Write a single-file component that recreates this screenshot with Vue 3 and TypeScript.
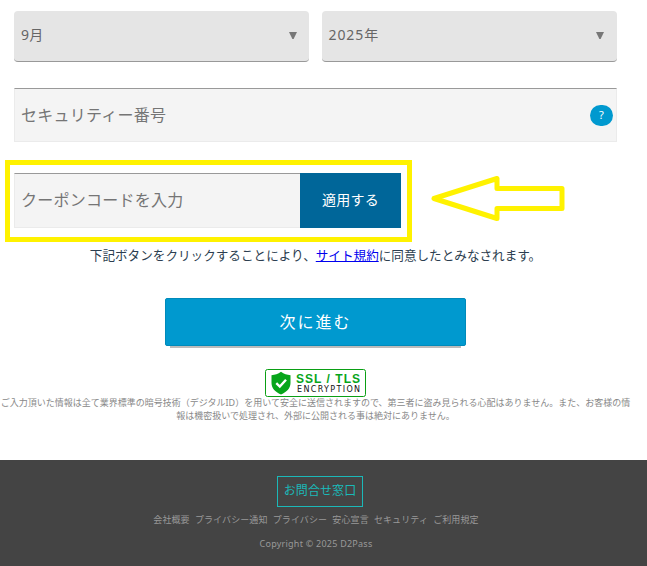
<script setup lang="ts">
interface FooterLink { label: string }

const expiry: string[] = ['9月', '2025年']
const links: FooterLink[] = [
  { label: '会社概要' },
  { label: 'プライバシー通知' },
  { label: 'プライバシー' },
  { label: '安心宣言' },
  { label: 'セキュリティ' },
  { label: 'ご利用規定' },
]
</script>

<template>
  <div class="page">
    <main class="form">
      <div class="selects">
        <div v-for="item in expiry" :key="item" class="select">
          <span class="value">{{ item }}</span>
          <svg class="caret" width="8" height="7" viewBox="0 0 8 7"><path d="M0 0H8L4.6 7H3.4Z" fill="#777" /></svg>
        </div>
      </div>

      <div class="field security">
        <span class="placeholder">セキュリティー番号</span>
        <span class="help">?</span>
      </div>

      <div class="coupon">
        <div class="field code"><span class="placeholder">クーポンコードを入力</span></div>
        <button class="apply" type="button">適用する</button>
        <div class="highlight"></div>
        <svg class="arrow" width="138" height="48" viewBox="0 0 138 48">
          <path d="M4 24.500L67 4.500V14.500H132V34.500H67V44.500Z" fill="none" stroke="#fff200" stroke-width="5" stroke-linejoin="round" />
        </svg>
      </div>

      <p class="terms">下記ボタンをクリックすることにより、<a>サイト規約</a>に同意したとみなされます。</p>
      <button class="next" type="button">次に進む</button>

      <svg class="ssl" width="101" height="28" viewBox="0 0 101 28">
        <rect x=".5" y=".5" width="100" height="27" rx="2" fill="#fff" stroke="#0a9f14" />
        <path d="M16 2.800C13 5 10 6 6.500 6.200V14C6.500 19 10 23 16 25.500C22 23 25.500 19 25.500 14V6.200C22 6 19 5 16 2.800Z" fill="#07a51b" />
        <path d="M11.300 14.200L14.800 17.500L21 10.800" fill="none" stroke="#fff" stroke-width="2.400" />
        <text x="31" y="14" class="ssl-title" textLength="64">SSL / TLS</text>
        <text x="32" y="23" class="ssl-sub" textLength="63">ENCRYPTION</text>
      </svg>
      <p class="notice">ご入力頂いた情報は全て業界標準の暗号技術（デジタルID）を用いて安全に送信されますので、第三者に盗み見られる心配はありません。また、お客様の情<br />報は機密扱いで処理され、外部に公開される事は絶対にありません。</p>
    </main>

    <footer class="footer">
      <a class="contact">お問合せ窓口</a>
      <nav class="links"><a v-for="link in links" :key="link.label">{{ link.label }}</a></nav>
      <p class="copy">Copyright © 2025 D2Pass</p>
    </footer>
  </div>
</template>

<style>
body { margin: 0; background: #fff; }
</style>

<style scoped>
* { box-sizing: border-box; }
.page {
  width: 647px;
  height: 566px;
  overflow: hidden;
  display: flex;
  flex-direction: column;
  background: #fff;
  font-family: "Noto Sans", "Noto Sans CJK JP", sans-serif;
}
p { margin: 0; }
button { border: 0; padding: 0; font-family: inherit; }
.form {
  width: 631px;
  height: 460px;
  padding-top: 11px;
  display: flex;
  flex-direction: column;
  align-items: center;
}
.selects { display: flex; gap: 13px; width: 603px; }
.select {
  flex: 1;
  height: 51px;
  padding: 0 12px 4px 7px;
  display: flex;
  align-items: center;
  justify-content: space-between;
  background: #e5e5e5;
  border-bottom: 1px solid #999;
  border-radius: 4px;
  color: #666;
  font-size: 14px;
}
.select + .select { padding-right: 13px; }
.value { letter-spacing: .9px; }
.select:first-child .value { letter-spacing: .3px; }
.caret { margin-top: 3px; }
.field {
  display: flex;
  align-items: center;
  justify-content: space-between;
  height: 55px;
  padding: 0 3px 0 6px;
  background: #f4f4f4;
  border: 1px solid #ebebeb;
  border-top-color: #999;
  color: #757575;
  font-size: 16px;
  letter-spacing: .25px;
}
.placeholder { margin-bottom: 2px; }
.security { width: 603px; height: 54px; margin-top: 26px; }
.help {
  width: 23px;
  height: 21px;
  border-radius: 11px;
  background: #0099cf;
  color: #fff;
  font-size: 11px;
  line-height: 19px;
  text-align: center;
}
.coupon { position: relative; display: flex; width: 603px; margin-top: 31px; }
.code { width: 286px; border-right: 0; }
.code .placeholder { margin-bottom: 3px; }
.apply {
  width: 101px;
  height: 55px;
  padding-bottom: 3px;
  background: #006699;
  color: #fff;
  font-size: 14px;
  letter-spacing: .3px;
}
.highlight {
  position: absolute;
  left: -9px;
  top: -13px;
  width: 407px;
  height: 82px;
  border: 5px solid #fff200;
}
.arrow { position: absolute; left: 416px; top: 1px; }
.terms {
  margin-top: 18px;
  height: 20px;
  line-height: 20px;
  font-size: 12.6px;
  color: #2c3e50;
  white-space: nowrap;
}
.terms a { color: #00e; text-decoration: underline; }
.next {
  width: 301px;
  height: 48px;
  margin-top: 32px;
  padding-bottom: 2px;
  background: #0099cf;
  border: 1px solid #008aba;
  border-radius: 2px;
  box-shadow: 0 7px 0 -5px #bbb;
  color: #fff;
  font-size: 16px;
  letter-spacing: 2px;
}
.ssl { display: block; flex: none; margin-top: 23px; }
.ssl-title { font: bold 12px "Liberation Sans", sans-serif; fill: #07a51b; }
.ssl-sub { font: 8px "DejaVu Sans", sans-serif; fill: #111; }
.notice {
  margin-top: -1px;
  font-size: 9px;
  line-height: 13px;
  color: #888;
  text-align: center;
  white-space: nowrap;
}
.footer {
  height: 106px;
  padding: 16px 15px 0 0;
  display: flex;
  flex-direction: column;
  align-items: center;
  background: #444;
  color: #999;
  font-size: 9px;
}
.contact {
  width: 86px;
  height: 31px;
  margin-left: 8px;
  border: 1px solid #1bb8b8;
  color: #1bb8b8;
  font-size: 12px;
  line-height: 27px;
  letter-spacing: .1px;
  text-align: center;
}
.links { display: flex; gap: 5.2px; margin-top: 6px; line-height: 14px; letter-spacing: .1px; white-space: nowrap; }
.copy { margin-top: 10px; line-height: 14px; letter-spacing: .24px; }
</style>
